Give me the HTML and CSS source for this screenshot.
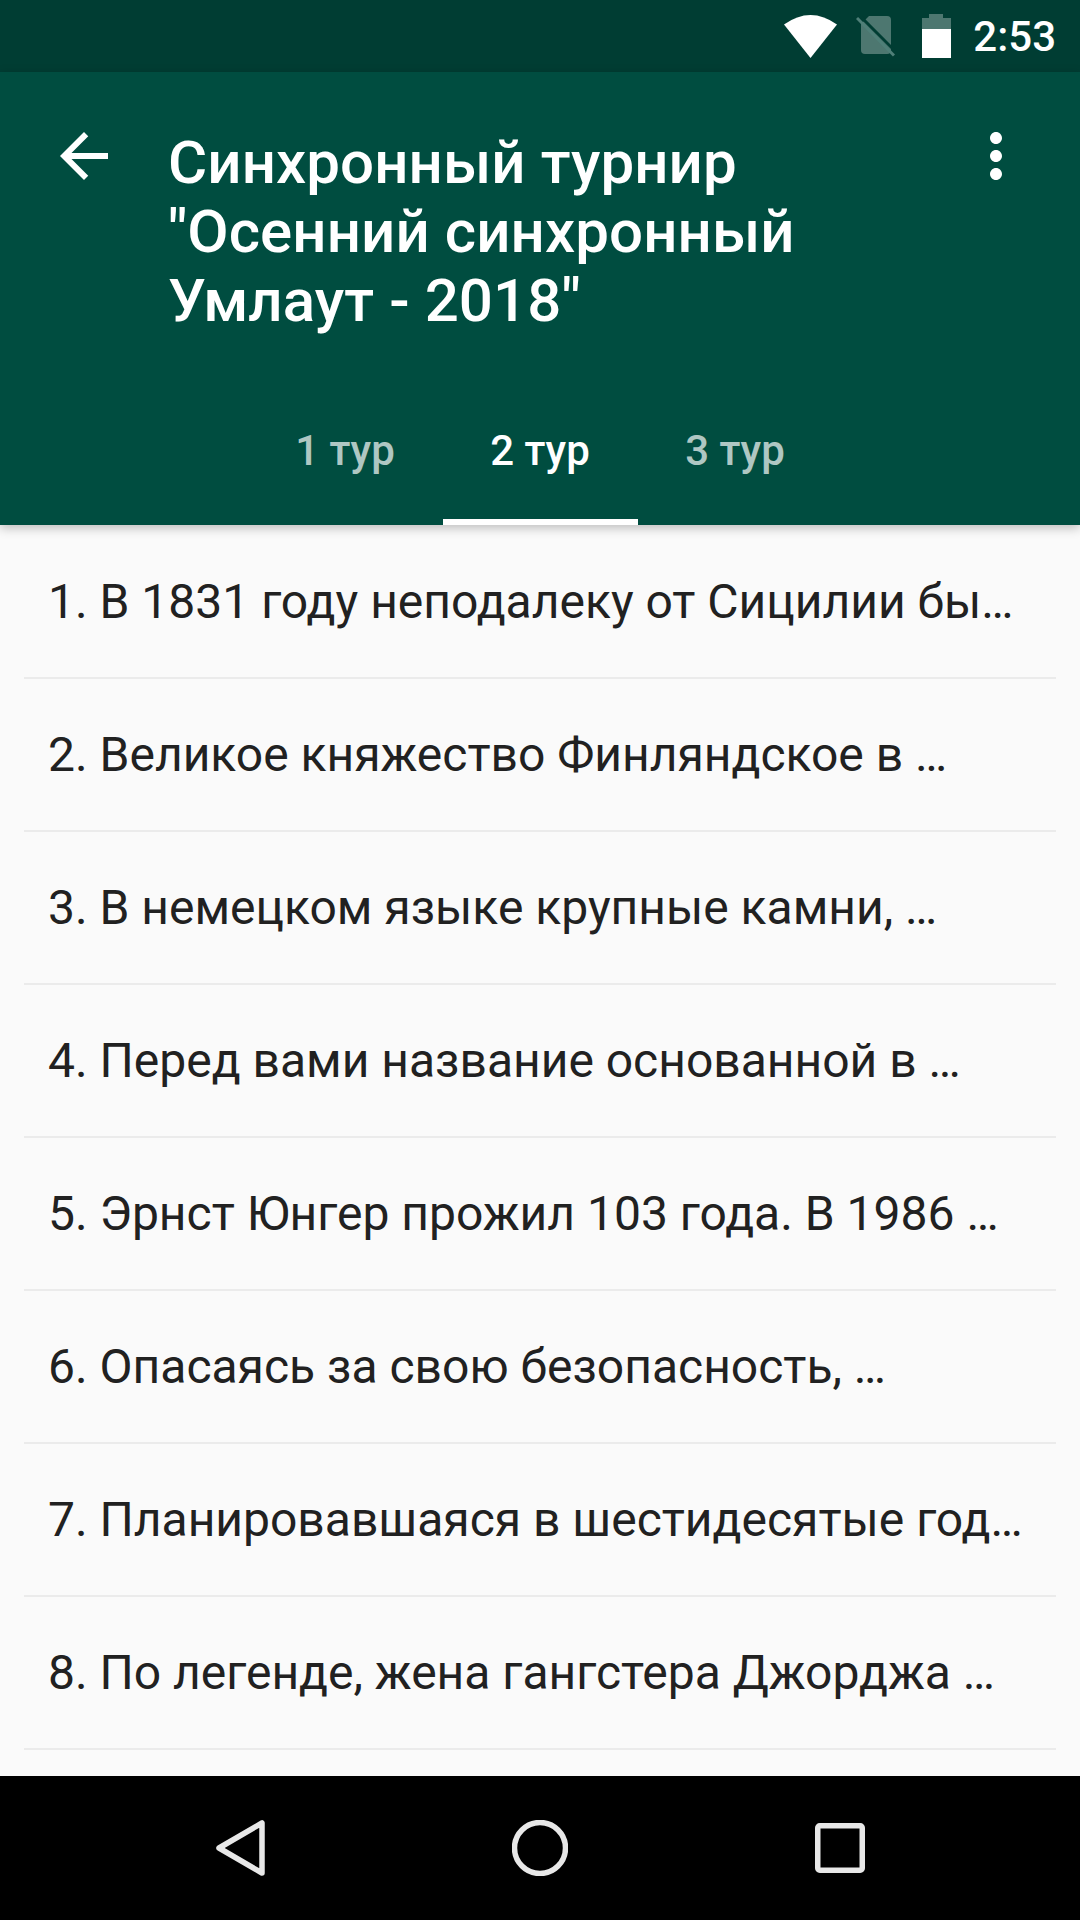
FILE: index.html
```html
<!DOCTYPE html>
<html>
<head lang="ru">
    <meta charset="UTF-8">
    <title>Синхронный турнир</title>
    <link rel="stylesheet" href="styles.css">
</head>
<body>
<div id="screen">
    <div id="status">
        <svg class="wifi" width="53" height="43" viewBox="0 0 53 43"><path d="M0 9.5Q26.5-9.500 53 9.500L26.500 43Z" fill="#fff"/></svg>
        <svg class="sim" width="39" height="41" viewBox="0 0 39 41">
            <path d="M13 0H31Q35 0 35 4V34Q35 38 31 38H9Q5 38 5 34V8Z" fill="#fff" fill-opacity=".3"/>
            <path d="M3 -1L41 37" stroke="#003d33" stroke-width="3" fill="none"/>
            <path d="M1 2L38 39.500" stroke="#4f7f78" stroke-width="3" fill="none"/>
        </svg>
        <svg class="battery" width="29" height="44" viewBox="0 0 29 44">
            <path d="M7 0H21V4H29V15H0V4H7Z" fill="#fff" fill-opacity=".3"/>
            <path d="M0 15H29V44H0Z" fill="#fff"/>
        </svg>
        <span class="time">2:53</span>
    </div>
    <div id="appbar">
        <div class="toolbar">
            <svg class="icon" width="72" height="72" viewBox="0 0 24 24"><path d="M20 11H7.830l5.590-5.590L12 4l-8 8 8 8 1.410-1.410L7.830 13H20v-2z" fill="#fff"/></svg>
            <h1 class="title">Синхронный турнир<br>"Осенний синхронный<br>Умлаут - 2018"</h1>
            <svg class="icon" width="72" height="72" viewBox="0 0 24 24"><path d="M12 8c1.100 0 2-.9 2-2s-.9-2-2-2-2 .9-2 2 .9 2 2 2zm0 2c-1.100 0-2 .9-2 2s.9 2 2 2 2-.9 2-2-.9-2-2-2zm0 6c-1.100 0-2 .9-2 2s.9 2 2 2 2-.9 2-2-.9-2-2-2z" fill="#fff"/></svg>
        </div>
        <ul id="tab">
            <li>1 тур</li>
            <li class="selected">2 тур</li>
            <li>3 тур</li>
        </ul>
    </div>
    <ul id="list">
        <li>1. В 1831 году неподалеку от Сицилии бы…</li>
        <li>2. Великое княжество Финляндское в …</li>
        <li>3. В немецком языке крупные камни, …</li>
        <li>4. Перед вами название основанной в …</li>
        <li>5. Эрнст Юнгер прожил 103 года. В 1986 …</li>
        <li>6. Опасаясь за свою безопасность, …</li>
        <li>7. Планировавшаяся в шестидесятые год…</li>
        <li>8. По легенде, жена гангстера Джорджа …</li>
    </ul>
    <div id="nav">
        <div class="nav-item"><svg width="49" height="56" viewBox="0 0 49 56"><path d="M3 28L46 3V53Z" fill="none" stroke="#e8e8e8" stroke-width="5.500" stroke-linejoin="round"/></svg></div>
        <div class="nav-item"><svg width="56" height="56" viewBox="0 0 56 56"><circle cx="28" cy="28" r="25.500" fill="none" stroke="#e8e8e8" stroke-width="5.500"/></svg></div>
        <div class="nav-item"><svg width="50" height="50" viewBox="0 0 50 50"><rect x="2.750" y="2.750" width="44.500" height="44.500" rx="2" fill="none" stroke="#e8e8e8" stroke-width="5.500"/></svg></div>
    </div>
</div>
</body>
</html>
```

FILE: styles.css
```css
*{
    margin: 0;
    padding: 0;
}
ol,ul{
    list-style: none;
}
body{
    font-family: Roboto, "Noto Sans", sans-serif;
    background: #fafafa;
}
#screen{
    width: 1080px;
    height: 1920px;
    display: flex;
    flex-direction: column;
    overflow: hidden;
}
#status{
    height: 72px;
    flex: none;
    background: #003d33;
    display: flex;
    align-items: center;
    justify-content: flex-end;
    padding-right: 24px;
    color: #fff;
}
#status svg{
    display: block;
}
.sim{
    margin-left: 19px;
}
.battery{
    margin-left: 27px;
}
.time{
    margin-left: 22px;
    font-size: 42px;
    font-weight: 500;
}
#appbar{
    height: 453px;
    flex: none;
    background: #004d40;
    display: flex;
    flex-direction: column;
    position: relative;
    z-index: 1;
    box-shadow: 0 3px 10px rgba(0,0,0,.25);
}
.toolbar{
    flex: 1;
    display: flex;
    align-items: flex-start;
    padding: 48px 48px 0;
}
.icon{
    flex: none;
}
.title{
    flex: 1;
    margin-left: 48px;
    margin-top: 8px;
    font-size: 60px;
    font-weight: 500;
    line-height: 69px;
    letter-spacing: .1px;
    color: #fff;
}
#tab{
    height: 144px;
    flex: none;
    display: flex;
    justify-content: center;
}
#tab li{
    width: 195px;
    box-sizing: border-box;
    text-align: center;
    font-size: 42px;
    font-weight: 500;
    line-height: 140px;
    color: rgba(255,255,255,.7);
}
#tab .selected{
    color: #fff;
    border-bottom: 6px solid #fff;
}
#list{
    flex: 1;
    overflow: hidden;
    padding: 1px 24px 0;
    background: #fafafa;
}
#list li{
    height: 153px;
    box-sizing: border-box;
    padding-left: 24px;
    border-bottom: 2px solid #ebebeb;
    font-size: 48px;
    line-height: 151px;
    color: #212121;
    white-space: nowrap;
}
#nav{
    height: 144px;
    flex: none;
    background: #000;
    display: flex;
    justify-content: center;
    align-items: center;
}
.nav-item{
    width: 300px;
    display: flex;
    justify-content: center;
}
```
